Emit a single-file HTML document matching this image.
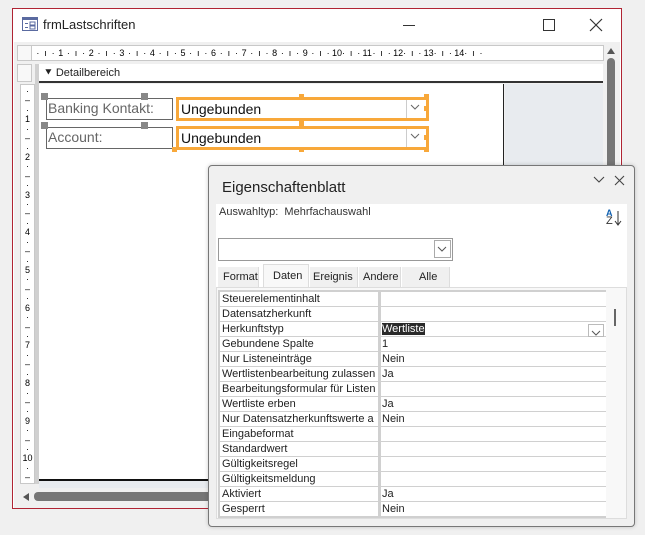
<!DOCTYPE html>
<html><head><style>
*{box-sizing:border-box;margin:0;padding:0}
body{width:645px;height:535px;background:#f0f0f0;font-family:"Liberation Sans",sans-serif;position:relative;overflow:hidden;font-size:12px;color:#222}
.a{position:absolute}
.row{position:absolute;left:220px;width:386px;height:14px;font-size:11px;line-height:14px}
.row .l{position:absolute;left:0;width:158px;height:14px;background:#fff;padding-left:2px;white-space:nowrap;overflow:hidden}
.row .v{position:absolute;left:161px;width:225px;height:14px;background:#fff;padding-left:1px}
.hr{position:absolute;left:34px;top:46px;display:flex;height:14px;font-size:9px;line-height:14px;color:#000}
.hr span{width:7.65px;text-align:center;display:block;white-space:nowrap}
.vr{position:absolute;left:21px;top:87px;width:13px;font-size:9px;color:#000;overflow:hidden;height:392px}
.vr span{display:block;height:9.43px;line-height:9.43px;text-align:center}
</style></head><body>
<div class="a" style="left:12px;top:8px;width:610px;height:501px;border:1px solid #b02434;background:#fff"></div>
<svg class="a" style="left:22px;top:17px" width="16" height="14"><rect x="0.5" y="0.5" width="15" height="13" fill="#fff" stroke="#5a6aa0"/><rect x="1" y="1" width="14" height="2" fill="#5a6aa0"/><rect x="3" y="6" width="3" height="1" fill="#5a6aa0"/><rect x="8" y="5" width="5" height="3" fill="none" stroke="#5a6aa0"/><rect x="3" y="10" width="3" height="1" fill="#5a6aa0"/><rect x="8" y="9" width="5" height="3" fill="none" stroke="#5a6aa0"/></svg>
<div class="a" style="left:43px;top:17px;font-size:13px">frmLastschriften</div>
<div class="a" style="left:403px;top:25px;width:12px;height:1px;background:#333"></div>
<div class="a" style="left:543px;top:19px;width:12px;height:12px;border:1px solid #333"></div>
<svg class="a" style="left:589px;top:18px" width="14" height="14"><path d="M1 1L13 13M13 1L1 13" stroke="#333" stroke-width="1.2"/></svg>
<div class="a" style="left:14px;top:42px;width:606px;height:466px;background:#f0f0f0"></div>
<div class="a" style="left:17px;top:45px;width:15px;height:16px;border:1px solid #c8c8c8;background:#f8f8f8"></div>
<div class="a" style="left:31px;top:45px;width:573px;height:16px;border:1px solid #c8c8c8;background:#fff"></div>
<div class="hr">
<span>·</span><span>ı</span><span>·</span><span>1</span><span>·</span><span>ı</span><span>·</span><span>2</span><span>·</span><span>ı</span><span>·</span><span>3</span><span>·</span><span>ı</span><span>·</span><span>4</span><span>·</span><span>ı</span><span>·</span><span>5</span><span>·</span><span>ı</span><span>·</span><span>6</span><span>·</span><span>ı</span><span>·</span><span>7</span><span>·</span><span>ı</span><span>·</span><span>8</span><span>·</span><span>ı</span><span>·</span><span>9</span><span>·</span><span>ı</span><span>·</span><span>10</span><span>·</span><span>ı</span><span>·</span><span>11</span><span>·</span><span>ı</span><span>·</span><span>12</span><span>·</span><span>ı</span><span>·</span><span>13</span><span>·</span><span>ı</span><span>·</span><span>14</span><span>·</span><span>ı</span><span>·</span>
</div>
<div class="a" style="left:17px;top:64px;width:15px;height:18px;border:1px solid #c8c8c8;background:#f8f8f8"></div>
<div class="a" style="left:20px;top:84px;width:15px;height:400px;border:1px solid #c8c8c8;background:#fff"></div>
<div class="vr">
<span>·</span><span>–</span><span>·</span><span>1</span><span>·</span><span>–</span><span>·</span><span>2</span><span>·</span><span>–</span><span>·</span><span>3</span><span>·</span><span>–</span><span>·</span><span>4</span><span>·</span><span>–</span><span>·</span><span>5</span><span>·</span><span>–</span><span>·</span><span>6</span><span>·</span><span>–</span><span>·</span><span>7</span><span>·</span><span>–</span><span>·</span><span>8</span><span>·</span><span>–</span><span>·</span><span>9</span><span>·</span><span>–</span><span>·</span><span>10</span><span>·</span><span>–</span>
</div>
<div class="a" style="left:35px;top:64px;width:4px;height:420px;background:#d0d0d0"></div>
<div class="a" style="left:39px;top:64px;width:564px;height:19px;background:#fff;border-bottom:2px solid #333;font-size:11px;line-height:18px;padding-left:5px">⯆ Detailbereich</div>
<div class="a" style="left:39px;top:84px;width:465px;height:396px;background:#fff;border-right:1px solid #222"></div>
<div class="a" style="left:505px;top:84px;width:98px;height:396px;background:#e8ebef"></div>
<div class="a" style="left:39px;top:479px;width:565px;height:2px;background:#111"></div>
<div class="a" style="left:39px;top:481px;width:565px;height:7px;background:#e8ebef"></div>
<div class="a" style="left:605px;top:42px;width:12px;height:445px;background:#f0f0f0"></div>
<svg class="a" style="left:606px;top:47px" width="10" height="8"><path d="M1 7L5 1L9 7Z" fill="#555"/></svg>
<div class="a" style="left:607px;top:58px;width:8px;height:425px;background:#767676;border-radius:4px"></div>
<div class="a" style="left:17px;top:488px;width:200px;height:16px;background:#f0f0f0"></div>
<svg class="a" style="left:22px;top:492px" width="8" height="10"><path d="M7 1L1 5L7 9Z" fill="#555"/></svg>
<div class="a" style="left:34px;top:492px;width:180px;height:9px;background:#767676;border-radius:4px"></div>
<div class="a" style="left:46px;top:98px;width:127px;height:22px;border:1px solid #666;color:#666;font-size:14px;line-height:19px;padding-left:1px">Banking Kontakt:</div>
<div class="a" style="left:46px;top:127px;width:127px;height:22px;border:1px solid #666;color:#666;font-size:14px;line-height:19px;padding-left:1px">Account:</div>
<div class="a" style="left:41px;top:93px;width:7px;height:7px;background:#888"></div>
<div class="a" style="left:41px;top:122px;width:7px;height:7px;background:#888"></div>
<div class="a" style="left:141px;top:93px;width:7px;height:7px;background:#888"></div>
<div class="a" style="left:141px;top:122px;width:7px;height:7px;background:#888"></div>
<div class="a" style="left:176px;top:97px;width:253px;height:24px;border:3px solid #f8a83a;background:#fff;font-size:14px;line-height:18px;padding-left:2px;color:#111">Ungebunden</div>
<div class="a" style="left:176px;top:126px;width:253px;height:24px;border:3px solid #f8a83a;background:#fff;font-size:14px;line-height:18px;padding-left:2px;color:#111">Ungebunden</div>
<div class="a" style="left:406px;top:100px;width:1px;height:18px;background:#ccc"></div>
<div class="a" style="left:406px;top:129px;width:1px;height:18px;background:#ccc"></div>
<svg class="a" style="left:410px;top:104px" width="10" height="6"><path d="M1 1L5 5L9 1" stroke="#666" fill="none"/></svg>
<svg class="a" style="left:410px;top:133px" width="10" height="6"><path d="M1 1L5 5L9 1" stroke="#666" fill="none"/></svg>
<div class="a" style="left:299px;top:94px;width:5px;height:5px;background:#f8a83a"></div>
<div class="a" style="left:424px;top:94px;width:5px;height:5px;background:#f8a83a"></div>
<div class="a" style="left:299px;top:121px;width:5px;height:5px;background:#f8a83a"></div>
<div class="a" style="left:424px;top:106px;width:5px;height:5px;background:#f8a83a"></div>
<div class="a" style="left:424px;top:135px;width:5px;height:5px;background:#f8a83a"></div>
<div class="a" style="left:424px;top:147px;width:5px;height:5px;background:#f8a83a"></div>
<div class="a" style="left:299px;top:147px;width:5px;height:5px;background:#f8a83a"></div>
<div class="a" style="left:172px;top:147px;width:5px;height:5px;background:#f8a83a"></div>
<div class="a" style="left:208px;top:165px;width:427px;height:362px;background:#f0f0f0;border:1px solid #777;border-radius:4px;box-shadow:0 0 4px rgba(0,0,0,.2)"></div>
<div class="a" style="left:222px;top:179px;font-size:15px;color:#222">Eigenschaftenblatt</div>
<svg class="a" style="left:593px;top:175px" width="36" height="12"><path d="M1 2L6 7L11 2M22 1L31 10M31 1L22 10" stroke="#444" fill="none" stroke-width="1.1"/></svg>
<div class="a" style="left:216px;top:204px;width:411px;height:84px;background:#fff"></div>
<div class="a" style="left:219px;top:206px;font-size:11px;color:#333">Auswahltyp:&nbsp;&nbsp;Mehrfachauswahl</div>
<div class="a" style="left:606px;top:209px;font-size:9px;line-height:8px;color:#1060b0;font-weight:bold">A<br><span style="color:#333;font-weight:normal;font-size:11px">Z</span></div>
<svg class="a" style="left:614px;top:211px" width="8" height="15"><path d="M4 0V13M1 10L4 14L7 10" stroke="#333" fill="none"/></svg>
<div class="a" style="left:218px;top:238px;width:235px;height:23px;border:1px solid #999;background:#fff"></div>
<div class="a" style="left:434px;top:240px;width:17px;height:18px;border:1px solid #aaa;background:#fff"></div>
<svg class="a" style="left:437px;top:246px" width="10" height="6"><path d="M1 1L5 5L9 1" stroke="#555" fill="none"/></svg>
<div class="a" style="left:218px;top:267px;width:41px;height:20px;background:#f0f0f0;border-right:1px solid #ddd;font-size:11px;line-height:20px;padding-left:5px">Format</div>
<div class="a" style="left:263px;top:264px;width:46px;height:24px;background:#f8f8f8;border:1px solid #ddd;border-bottom:none;font-size:11px;line-height:22px;padding-left:9px">Daten</div>
<div class="a" style="left:310px;top:267px;width:48px;height:20px;background:#f0f0f0;border-right:1px solid #ddd;font-size:11px;line-height:20px;padding-left:3px">Ereignis</div>
<div class="a" style="left:359px;top:267px;width:42px;height:20px;background:#f0f0f0;border-right:1px solid #ddd;font-size:11px;line-height:20px;padding-left:4px">Andere</div>
<div class="a" style="left:402px;top:267px;width:48px;height:20px;background:#f0f0f0;border-right:1px solid #ddd;font-size:11px;line-height:20px;padding-left:17px">Alle</div>
<div class="a" style="left:216px;top:287px;width:411px;height:232px;background:#f8f8f8;border:1px solid #ddd"></div>
<div class="a" style="left:218px;top:290px;width:388px;height:228px;background:#d0d0d0"></div>
<div class="a" style="left:614px;top:309px;width:2px;height:17px;background:#666"></div>
<div class="row" style="top:292px"><div class="l">Steuerelementinhalt</div><div class="v"></div></div>
<div class="row" style="top:307px"><div class="l">Datensatzherkunft</div><div class="v"></div></div>
<div class="row" style="top:322px"><div class="l">Herkunftstyp</div><div class="v"><span style="background:#2a2a2a;color:#fff">Wertliste</span></div></div>
<div class="row" style="top:337px"><div class="l">Gebundene Spalte</div><div class="v">1</div></div>
<div class="row" style="top:352px"><div class="l">Nur Listeneinträge</div><div class="v">Nein</div></div>
<div class="row" style="top:367px"><div class="l">Wertlistenbearbeitung zulassen</div><div class="v">Ja</div></div>
<div class="row" style="top:382px"><div class="l">Bearbeitungsformular für Listen</div><div class="v"></div></div>
<div class="row" style="top:397px"><div class="l">Wertliste erben</div><div class="v">Ja</div></div>
<div class="row" style="top:412px"><div class="l">Nur Datensatzherkunftswerte a</div><div class="v">Nein</div></div>
<div class="row" style="top:427px"><div class="l">Eingabeformat</div><div class="v"></div></div>
<div class="row" style="top:442px"><div class="l">Standardwert</div><div class="v"></div></div>
<div class="row" style="top:457px"><div class="l">Gültigkeitsregel</div><div class="v"></div></div>
<div class="row" style="top:472px"><div class="l">Gültigkeitsmeldung</div><div class="v"></div></div>
<div class="row" style="top:487px"><div class="l">Aktiviert</div><div class="v">Ja</div></div>
<div class="row" style="top:502px"><div class="l">Gesperrt</div><div class="v">Nein</div></div>
<div class="a" style="left:588px;top:324px;width:16px;height:13px;border:1px solid #bbb;background:#fff"></div>
<svg class="a" style="left:591px;top:330px" width="10" height="6"><path d="M1 1L5 5L9 1" stroke="#555" fill="none"/></svg>
</body></html>
